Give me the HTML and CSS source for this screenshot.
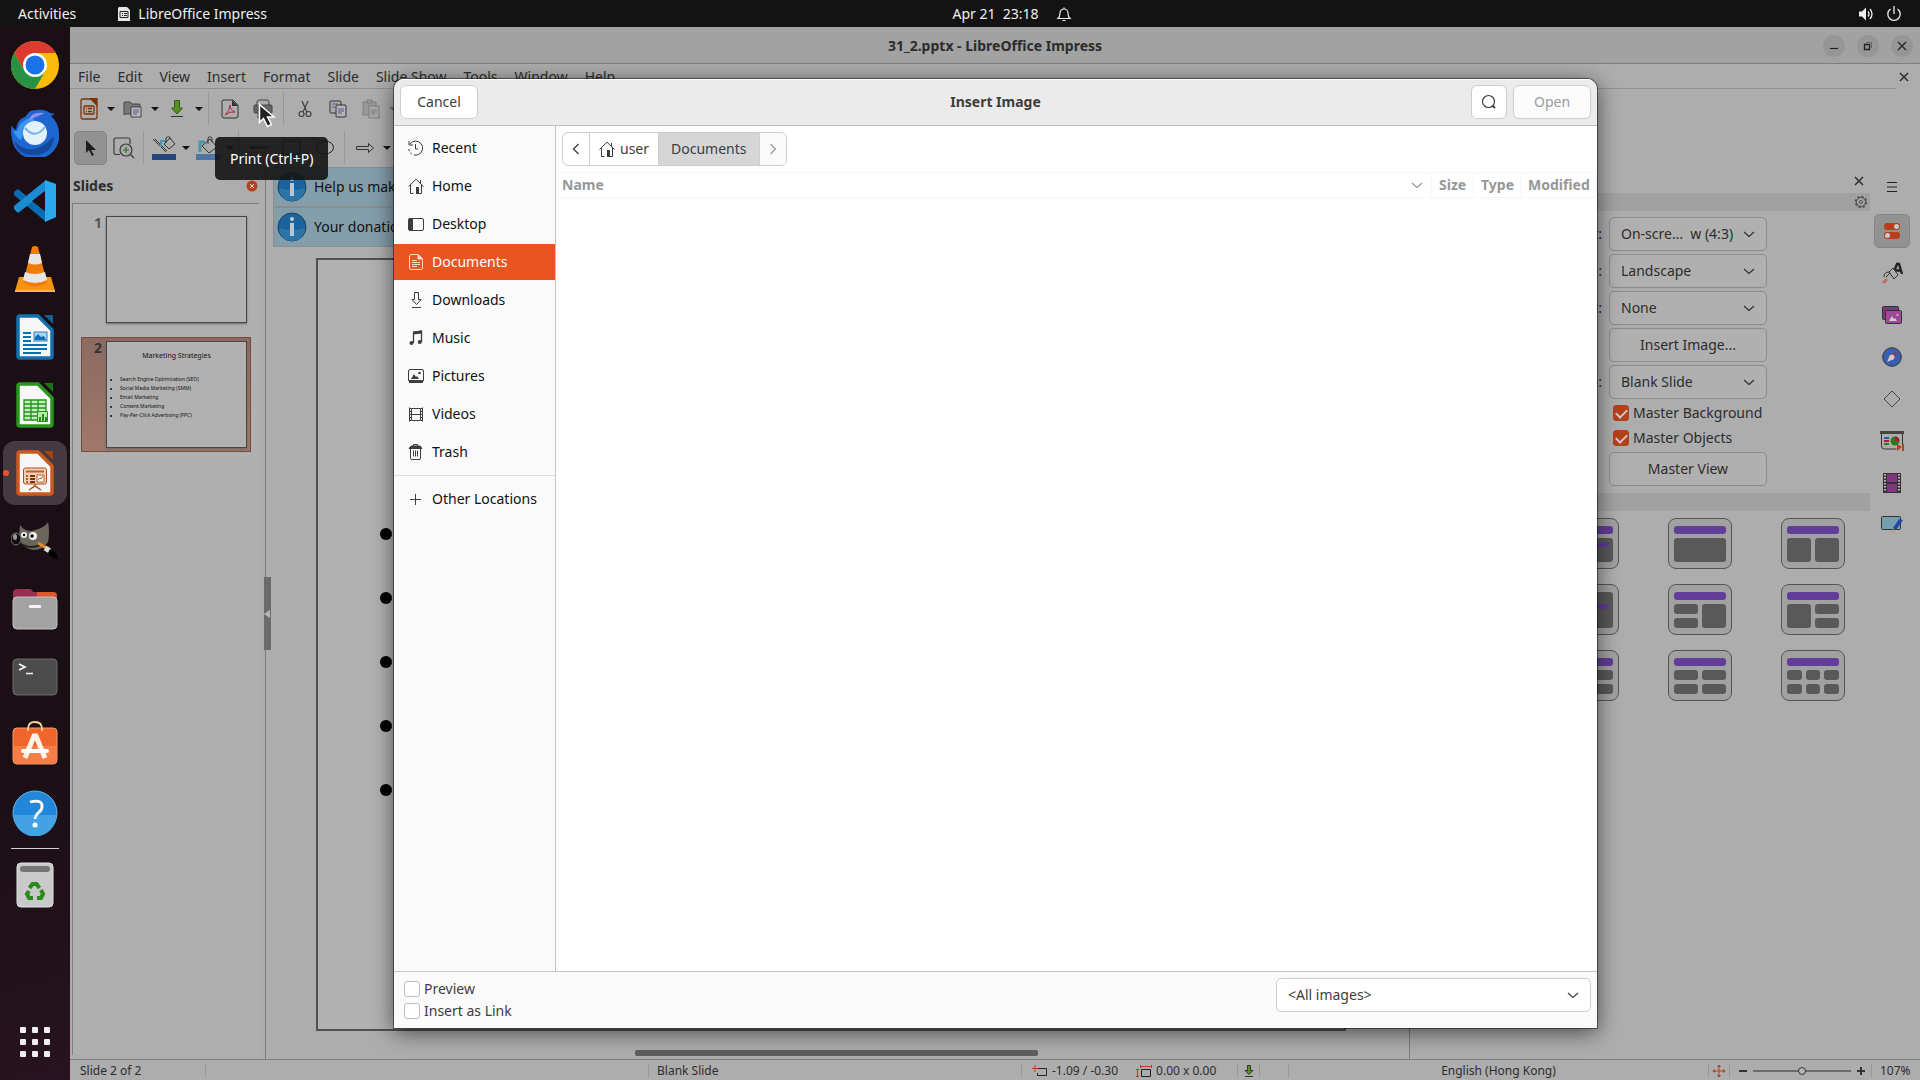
FILE: index.html
```html
<!DOCTYPE html>
<html lang="en">
<head>
  <meta charset="UTF-8">
  <meta name="viewport" content="width=device-width, initial-scale=1">
  <title>31_2.pptx - LibreOffice Impress</title>
  <link rel="stylesheet" href="styles.css">
</head>

<body>

<!-- Shared symbols -->
<svg class="symbols" width="0" height="0">
  <symbol id="chevron" viewBox="0 0 12 12"><path d="M1 4 6 8.500 11 4" fill="none" stroke="currentColor" stroke-width="1.100"/></symbol>
  <symbol id="cross" viewBox="0 0 12 12"><path d="M2 2 10 10M10 2 2 10" fill="none" stroke="currentColor" stroke-width="1.500"/></symbol>
  <symbol id="house" viewBox="0 0 16 16"><path d="M.5 8.500 8 1.200l7.500 7.300M2.500 7v8.500h3M13.500 7v8.500h-3M12.500 2v4" fill="none" stroke="currentColor"/><path d="M8 9h3v7H8z" fill="currentColor"/></symbol>
  <symbol id="info" viewBox="0 0 30 30"><circle cx="15" cy="15" r="14" fill="#1c629c" stroke="#1d4260"/><path d="M2 16q13 4 26 0a13 13 0 0 1-26 0z" fill="#2b74a6"/><circle cx="15" cy="7" r="2" fill="#c2cdd6"/><path d="M13 11h4v13h-4z" fill="#b9c5cf"/></symbol>
</svg>

<!-- Top panel -->
<div class="topbar">
  <div class="topbar-left">
    <span>Activities</span>
    <span class="app-name">
      <svg width="12" height="14" viewBox="0 0 12 14"><path d="M1 0h8l3 3v11H0V1z" fill="#e8e8e8"/><path d="M2 4.500h8v6H2zM4 6.500h1M6 6.500h3M4 8.500h1M6 8.500h3" stroke="#222" fill="none"/></svg>
      LibreOffice Impress
    </span>
  </div>
  <div class="topbar-clock">
    <span>Apr 21&nbsp; 23:18</span>
    <svg width="16" height="16" viewBox="0 0 16 16" fill="none" stroke="#eee" stroke-width="1.200"><path d="M2 12.500c2-1.500 2-3 2-5.500a4 4 0 0 1 8 0c0 2.500 0 4 2 5.500zM6.500 14.500h3M8 1.500v2"/></svg>
  </div>
  <div class="topbar-right">
    <svg width="16" height="16" viewBox="0 0 16 16"><path d="M1 5.500h3L8 1.500v13L4 10.500H1z" fill="#eee"/><path d="M10 5.500q2 2.500 0 5M12 3q4 5 0 10" fill="none" stroke="#eee" stroke-width="1.300"/></svg>
    <svg width="16" height="16" viewBox="0 0 16 16" fill="none" stroke="#eee" stroke-width="1.300"><path d="M4.500 3a6.200 6.200 0 1 0 7 0M8 0v8"/></svg>
  </div>
</div>

<div class="desktop">

  <!-- Dock -->
  <nav class="dock">
    <div class="dock-item">
      <svg width="48" height="48" viewBox="0 0 48 48"><circle cx="24" cy="24" r="24" fill="#fbbc09"/><path d="M3.200 12A24 24 0 0 1 44.800 12H24L13.600 30z" fill="#dd3b30"/><path d="M3.200 12A24 24 0 0 0 24 48L34.400 30 24 34 13.600 30z" fill="#289144"/><circle cx="24" cy="24" r="12" fill="#fff"/><circle cx="24" cy="24" r="9.500" fill="#1a73e8"/></svg>
    </div>
    <div class="dock-item">
      <svg width="48" height="48" viewBox="0 0 48 48"><path d="M1 16q1 4 4 5Q6 10 14 8L18 3q2-2 8-2 8-1 13 3l5 1-4 2q8 7 8 18A23 22 0 0 1 1 30Q-1 22 1 16z" fill="#1e67d2"/><path d="M2 22q8 14 9 6 2-10 14-15l-4-5Q8 12 6 22z" fill="#3b95f3"/><path d="M18 12q1-10 16-8l-7 3q-6 2-9 5z" fill="#9a8ff0"/><circle cx="24" cy="24" r="12" fill="#e3f1fc"/><path d="M14 19q10 12 20-1" fill="none" stroke="#77b3ea" stroke-width="2"/><path d="M3 32q10 10 20 8t20-13q-1 18-19 19T3 32z" fill="#144a9c"/></svg>
    </div>
    <div class="dock-item">
      <svg width="42" height="42" viewBox="0 0 42 42"><path d="M0 12l4-3 28 23v10L0 15z" fill="#0a6bb0"/><path d="M0 29l4 4L32 11V0L0 26z" fill="#1b8bd3"/><path d="M31 0l11 4v33l-11 5z" fill="#29aaf0"/><path d="M31 11 18 21l13 10z" fill="#1b0f16"/></svg>
    </div>
    <div class="dock-item">
      <svg width="42" height="48" viewBox="0 0 42 48"><path d="M5 32h32l4 14q0 1-1 1H2q-1 0-1-1z" fill="#f79413"/><path d="M1 45h40v2H1z" fill="#ffb640"/><path d="M18 2q3-2 6 0l9 36q-12 7-24 0z" fill="#ef7d0a"/><path d="M16 9h10l2 9q-7 3-14 0zM11 27q10 4 20 0l2 8q-12 6-24 0z" fill="#e6e6e6"/></svg>
    </div>
    <div class="dock-item">
      <svg width="38" height="46" viewBox="0 0 38 46"><path d="M4 2h18l14 14v26q0 2-2 2H4q-2 0-2-2V4q0-2 2-2z" fill="#f7f7f7" stroke="#1370ae" stroke-width="3.500"/><path d="M28 1h9v9z" fill="#155f91"/><path d="M7 19h8M7 23h8M7 27h8M7 31h24M7 35h24M7 39h18" stroke="#0b70b0" stroke-width="2"/><rect x="18" y="18" width="13" height="9" fill="#a5d5f0" stroke="#2a7fb4"/><path d="M19 26v-3l3-3 3 3 3-1 2 4z" fill="#0b70b0"/></svg>
    </div>
    <div class="dock-item">
      <svg width="38" height="46" viewBox="0 0 38 46"><path d="M4 2h18l14 14v26q0 2-2 2H4q-2 0-2-2V4q0-2 2-2z" fill="#f7f7f7" stroke="#29961e" stroke-width="3.500"/><path d="M28 1h9v9z" fill="#1c7415"/><path d="M8 18h22v20H8z" fill="#c4f0bd"/><path d="M8 18h22v20H8zM8 22h22M8 26h22M8 30h22M8 34h22M15 18v20M22 18v20" fill="none" stroke="#23911a" stroke-width="1.300"/><path d="M21.500 29.500h10v10h-10z" fill="#b3e8a9" stroke="#23911a"/><path d="M24 39v-4M27 39v-7M30 39v-4" stroke="#23911a" stroke-width="2"/></svg>
    </div>
    <div class="dock-item active">
      <svg width="38" height="46" viewBox="0 0 38 46"><path d="M4 2h18l14 14v26q0 2-2 2H4q-2 0-2-2V4q0-2 2-2z" fill="#f7f7f7" stroke="#cc5a1f" stroke-width="3.500"/><path d="M28 1h9v9z" fill="#a3430d"/><rect x="7.500" y="18" width="23" height="16" rx="2" fill="#f1d0bb" stroke="#a9501e"/><path d="M10 21.500h18" stroke="#c95a1b" stroke-width="2"/><path d="M10 26h2M10 29h2M10 32h2" stroke="#c95a1b" stroke-width="2"/><path d="M14 26h5M14 29h5M14 32h5" stroke="#7c3006" stroke-width="2"/><path d="M21 25h7v7h-7zM22 30l2-2 1 1 2-3" fill="#fff" stroke="#c95a1b"/><path d="M19 34v2M13 40l6-4 6 4" fill="none" stroke="#a9501e" stroke-width="1.500"/></svg>
    </div>
    <div class="dock-item">
      <svg width="48" height="40" viewBox="0 0 48 40"><path d="M9 4q4 6 12 6Q34 7 37 1q2 10 0 20-5 8-14 8Q12 28 8 17z" fill="#6b665c"/><ellipse cx="5" cy="18" rx="5" ry="6" fill="#111" stroke="#777"/><ellipse cx="4" cy="16" rx="2" ry="3" fill="#999"/><circle cx="13" cy="14" r="3" fill="#eee"/><circle cx="22" cy="15" r="4" fill="#eee"/><circle cx="13" cy="14" r="1.200"/><circle cx="21" cy="15" r="1.700"/><path d="M12 24q8 4 17 0" stroke="#222" fill="none" stroke-width="2"/><path d="M27 22l10 6" stroke="#e88b20" stroke-width="3"/><path d="M34 27l5 3" stroke="#ddd" stroke-width="5"/><path d="M39 28q6 2 8 10-7-1-10-6z" fill="#000"/></svg>
    </div>
    <div class="dock-item">
      <svg width="46" height="42" viewBox="0 0 46 42"><path d="M1 12V5q0-4 4-4h13q2 0 3 3h20q4 0 4 4v4z" fill="#9a2f53"/><path d="M25 4h16q4 0 4 4v4H25z" fill="#e0552a"/><rect x="1" y="9" width="44" height="32" rx="4" fill="#a3a3a3" stroke="#c2c2c2"/><rect x="17" y="17" width="12" height="3" rx="1" fill="#f4f4f4"/></svg>
    </div>
    <div class="dock-item">
      <svg width="46" height="38" viewBox="0 0 46 38"><rect x="1" y="1" width="44" height="36" rx="4" fill="#4c4c4c" stroke="#6b6b6b"/><path d="M7 6l6 3-6 3M14 15.500h7" fill="none" stroke="#f4f4f4" stroke-width="1.700"/></svg>
    </div>
    <div class="dock-item store">
      <svg width="46" height="44" viewBox="0 0 46 44"><rect x="1" y="7" width="44" height="36" rx="4" fill="#f0652b" stroke="#f79a6c"/><path d="M2 25h42v14q0 3-3 3H5q-3 0-3-3z" fill="#f47e45"/><path d="M16 10V8q0-7 7-7t7 7v2" fill="none" stroke="#f7d49b" stroke-width="1.800"/><path d="M13 37l9-22h2l9 22" fill="none" stroke="#fff0e8" stroke-width="5"/><path d="M11 30h24" stroke="#fff" stroke-width="4" stroke-linecap="round"/></svg>
    </div>
    <div class="dock-item">
      <svg width="46" height="46" viewBox="0 0 46 46"><circle cx="23" cy="23" r="22" fill="#2087da" stroke="#6cb5ea"/><path d="M1.500 25h43a21.500 21.500 0 0 1-43 0z" fill="#42a2e3"/><path d="M18 12q13-3 12 5 0 3-4 6-3 3-3 6" fill="none" stroke="#fff" stroke-width="2.800"/><circle cx="23" cy="35" r="2.500" fill="#fff"/></svg>
    </div>
    <hr class="dock-line">
    <div class="dock-item">
      <svg width="38" height="46" viewBox="0 0 38 46"><rect x="1" y="1" width="36" height="44" rx="4" fill="#c9c9c9" stroke="#e3e3e3"/><rect x="4" y="4" width="30" height="6" rx="3" fill="#757575"/><g fill="none" stroke="#2c8a1d" stroke-width="4"><path d="M13.500 26l3-4h4l3 4"/><path d="M25 28l2 4-2 4h-4"/><path d="M17 36h-4l-2-4 2-3"/></g></svg>
    </div>
    <div class="dock-item apps">
      <svg width="30" height="30" viewBox="0 0 30 30" fill="#f0f0f0"><rect width="6" height="6" rx="1"/><rect x="12" width="6" height="6" rx="1"/><rect x="24" width="6" height="6" rx="1"/><rect y="12" width="6" height="6" rx="1"/><rect x="12" y="12" width="6" height="6" rx="1"/><rect x="24" y="12" width="6" height="6" rx="1"/><rect y="24" width="6" height="6" rx="1"/><rect x="12" y="24" width="6" height="6" rx="1"/><rect x="24" y="24" width="6" height="6" rx="1"/></svg>
    </div>
  </nav>

  <!-- Impress window -->
  <main class="window">
    <div class="titlebar">
      <div class="window-title">31_2.pptx - LibreOffice Impress</div>
      <div class="window-buttons">
        <button aria-label="Minimize"><svg width="12" height="12"><path d="M2 8.500h8" stroke="#222" stroke-width="1.200"/></svg></button>
        <button aria-label="Restore"><svg width="12" height="12" fill="none" stroke="#222"><path d="M2.500 4.500h5v5h-5z" stroke-width="1.400"/><path d="M4 2.500h5.500V8" stroke="#666"/></svg></button>
        <button aria-label="Close"><svg width="12" height="12"><use href="#cross"/></svg></button>
      </div>
    </div>

    <div class="menubar">
      <div class="menus">
        <a href="#">File</a><a href="#">Edit</a><a href="#">View</a><a href="#">Insert</a><a href="#">Format</a><a href="#">Slide</a><a href="#">Slide Show</a><a href="#">Tools</a><a href="#">Window</a><a href="#">Help</a>
      </div>
      <button class="plain" aria-label="Close document"><svg width="12" height="12"><use href="#cross"/></svg></button>
    </div>

    <div class="toolbar">
      <button aria-label="New"><svg width="18" height="22" viewBox="0 0 18 22" fill="none" stroke="#7c3208" stroke-width="1.300"><path d="M3 1h8l6 6v12q0 2-2 2H3q-2 0-2-2V3q0-2 2-2z"/><path d="M10 0h6q1 0 1 1v6z" fill="#7c3208"/><rect x="4" y="8" width="10" height="8" rx="1"/><path d="M6 10.500h1M8 10.500h4M6 13.500h1M8 13.500h4"/></svg></button>
      <button class="drop" aria-label="New menu"></button>
      <button aria-label="Open"><svg width="20" height="18" viewBox="0 0 20 18"><path d="M1 15V3q0-1 1-1h5l2 2h7q1 0 1 1v9H2z" fill="#777" stroke="#444"/><path d="M8 7h10v10H8z" fill="#bbb" stroke="#444"/><path d="M10 10h6M10 12h6M10 14h4" stroke="#5c54a0"/></svg></button>
      <button class="drop" aria-label="Open menu"></button>
      <button aria-label="Save"><svg width="14" height="18" viewBox="0 0 14 18"><path d="M4.500.5h5V8h3L7 14 1.500 8h3z" fill="#5b8f22" stroke="#3b5c18"/><path d="M1 16.500h12" stroke="#333"/></svg></button>
      <button class="drop" aria-label="Save menu"></button>
      <span class="sep"></span>
      <button aria-label="Export as PDF"><svg width="18" height="20" viewBox="0 0 18 20" fill="none"><path d="M2 1h10l5 5v11q0 2-2 2H3q-2 0-2-2V2z" stroke="#333"/><path d="M11 1v6h6z" fill="#333"/><path d="M4 16q5-4 5-10 0 5 5 7-5-1-10 3z" stroke="#b3263f"/></svg></button>
      <button aria-label="Print"><svg width="20" height="20" viewBox="0 0 20 20" fill="none" stroke="#444"><path d="M4 6V3q0-2 2-2h8q2 0 2 2v3"/><rect x="1" y="6" width="18" height="8" rx="1" fill="#666"/><path d="M5 11h10v8H5z" fill="#aaa"/></svg></button>
      <span class="sep"></span>
      <button aria-label="Cut"><svg width="16" height="18" viewBox="0 0 16 18" fill="none" stroke="#3f3f3f" stroke-width="1.200"><path d="M5 1l5 11M11 1 6 12"/><circle cx="4.500" cy="14" r="2.500"/><circle cx="11.500" cy="14" r="2.500"/></svg></button>
      <button aria-label="Copy"><svg width="18" height="18" viewBox="0 0 18 18" stroke="#333"><rect x="1" y="1" width="11" height="12" rx="1" fill="#aaa"/><path d="M3 4h6M3 7h3" stroke="#5c54a0"/><rect x="7" y="5" width="10" height="12" rx="1" fill="#b5b5b5"/><path d="M9 9h6M9 11h6M9 13h4" stroke="#5c54a0"/></svg></button>
      <button aria-label="Paste"><svg width="18" height="20" viewBox="0 0 18 20" stroke="#7e7e7e"><path d="M1 3h13v13H1z" fill="#999"/><path d="M5 1h5v3H5z" fill="#999"/><rect x="7" y="7" width="10" height="12" fill="#a9a9a9"/><path d="M9 11h6M9 13h6M9 15h4"/></svg></button>
      <button class="drop faded" aria-label="Paste menu"></button>
    </div>

    <div class="toolbar drawbar">
      <button class="pressed" aria-label="Select"><svg width="12" height="18" viewBox="0 0 12 18"><path d="M1 1v13l3-3 3 6 2-1-3-5h5z" fill="#1c1c1c"/></svg></button>
      <button aria-label="Zoom and pan"><svg width="22" height="22" viewBox="0 0 22 22" fill="none" stroke="#3c3c3c" stroke-width="1.200"><path d="M7 17.500H3q-2 0-2-2V3q0-2 2-2h12q2 0 2 2v4"/><circle cx="13" cy="13" r="6" fill="#aaa"/><path d="M17.500 17.500 21 21"/><path d="M10 13h6M13 10v6" stroke="#207a17"/></svg></button>
      <span class="sep"></span>
      <button aria-label="Line color"><svg width="24" height="24" viewBox="0 0 24 24" fill="none" stroke="#333"><path d="M1 3l13 13M3 3l12 12"/><path d="M9 11V5h5" stroke="#4f94aa" stroke-width="2"/><path d="M12 8l6-6 5 6-6 5zM14 7V2q3-3 5 1"/><path d="M0 18h24v6H0z" fill="#26457b" stroke="none"/></svg></button>
      <button class="drop" aria-label="Line color menu"></button>
      <button aria-label="Fill color"><svg width="24" height="24" viewBox="0 0 24 24" fill="none" stroke="#333"><path d="M4 16V6h5" stroke="#4f94aa" stroke-width="3"/><path d="M6 10l8-7 7 8-8 6z" fill="#aaa"/><path d="M12 8V2q3-3 4 1v3"/><path d="M0 18h24v6H0z" fill="#4c74a4" stroke="none"/></svg></button>
      <button class="drop" aria-label="Fill color menu"></button>
      <span class="sep"></span>
      <button aria-label="Line"><svg width="20" height="16"><path d="M1 7.500h18" stroke="#222" stroke-width="2"/></svg></button>
      <button aria-label="Rectangle"><svg width="20" height="16"><path d="M1 1h17v13H1z" fill="none" stroke="#222"/></svg></button>
      <button aria-label="Ellipse"><svg width="20" height="16"><ellipse cx="10" cy="7.500" rx="8.500" ry="6.500" fill="none" stroke="#222"/></svg></button>
      <span class="sep"></span>
      <button aria-label="Arrow"><svg width="18" height="12" viewBox="0 0 18 12"><path d="M.5 4.500h12v-3l5 4.500-5 4.500v-3H.5z" fill="none" stroke="#333"/></svg></button>
      <button class="drop" aria-label="Arrow menu"></button>
    </div>

    <div class="workspace">
      <!-- Slide list -->
      <aside class="slides-panel">
        <div class="panel-head">
          <strong>Slides</strong>
          <button class="plain" aria-label="Close slides pane"><svg width="12" height="12" viewBox="0 0 12 12"><circle cx="6" cy="6" r="5.500" fill="#b5401c"/><path d="M4 4l4 4M8 4 4 8" stroke="#ddd"/></svg></button>
        </div>
        <div class="slide-list">
          <div class="slide-row">
            <span class="slide-no">1</span>
            <div class="thumb"></div>
          </div>
          <div class="slide-row selected">
            <span class="slide-no">2</span>
            <div class="thumb">
              <div class="thumb-title">Marketing Strategies</div>
              <ul class="thumb-list">
                <li>Search Engine Optimization (SEO)</li>
                <li>Social Media Marketing (SMM)</li>
                <li>Email Marketing</li>
                <li>Content Marketing</li>
                <li>Pay-Per-Click Advertising (PPC)</li>
              </ul>
            </div>
          </div>
        </div>
      </aside>

      <!-- Editor -->
      <section class="editor">
        <div class="pane-handle"><svg width="6" height="8"><path d="M6 0v8L0 4z" fill="#b5b5b5"/></svg></div>
        <div class="infobar"><svg width="30" height="30"><use href="#info"/></svg><span>Help us mak</span></div>
        <div class="infobar"><svg width="30" height="30"><use href="#info"/></svg><span>Your donatio</span></div>
        <div class="canvas">
          <ul class="page">
            <li></li><li></li><li></li><li></li><li></li>
          </ul>
        </div>
        <div class="scroll-track"><div class="scroll-thumb"></div></div>
      </section>

      <!-- Properties -->
      <aside class="properties">
        <div class="deck-title"><button class="plain" aria-label="Close sidebar deck"><svg width="12" height="12"><use href="#cross"/></svg></button></div>
        <div class="deck-bar">
          <svg width="14" height="14" viewBox="0 0 14 14" fill="none" stroke="#555"><circle cx="7" cy="7" r="5.300" stroke-dasharray="2.500 1.600" stroke-width="2"/><circle cx="7" cy="7" r="4.500"/><circle cx="7" cy="7" r="1.500"/></svg>
        </div>
        <div class="slide-props">
          <label for="format">Format:</label>
          <div class="select"><select id="format"><option>On-scre…&nbsp; w (4:3)</option></select><svg width="12" height="12"><use href="#chevron"/></svg></div>
          <label for="orientation">Orientation:</label>
          <div class="select"><select id="orientation"><option>Landscape</option></select><svg width="12" height="12"><use href="#chevron"/></svg></div>
          <label for="background">Background:</label>
          <div class="select"><select id="background"><option>None</option></select><svg width="12" height="12"><use href="#chevron"/></svg></div>
          <button class="wide">Insert Image...</button>
          <label for="master">Master Slide:</label>
          <div class="select"><select id="master"><option>Blank Slide</option></select><svg width="12" height="12"><use href="#chevron"/></svg></div>
          <div class="checks">
            <label><input type="checkbox" checked>Master Background</label>
            <label><input type="checkbox" checked>Master Objects</label>
          </div>
          <button class="wide">Master View</button>
        </div>
        <div class="deck-bar"></div>
        <div class="layouts">
          <div class="layout"><i class="head"></i><i class="full lines"></i></div>
          <div class="layout"><i class="head"></i><i class="full"></i></div>
          <div class="layout"><i class="head"></i><i class="half tall"></i><i class="half tall"></i></div>
          <div class="layout"><i class="whole lines"></i></div>
          <div class="layout"><i class="head"></i><i class="half"></i><i class="half tall"></i><i class="half"></i></div>
          <div class="layout"><i class="head"></i><i class="half tall"></i><i class="half"></i><i class="half"></i></div>
          <div class="layout"><i class="head"></i><i class="row"></i><i class="row"></i></div>
          <div class="layout"><i class="head"></i><i class="half"></i><i class="half"></i><i class="half"></i><i class="half"></i></div>
          <div class="layout"><i class="head"></i><i></i><i></i><i></i><i></i><i></i><i></i></div>
        </div>
      </aside>

      <nav class="tabs">
        <button class="menu-tab" aria-label="Sidebar settings"><svg width="10" height="10"><path d="M0 .5h10M0 5h10M0 9.500h10" stroke="#222" stroke-width="1"/></svg></button>
        <button class="pressed" aria-label="Properties"><svg width="16" height="16"><rect width="16" height="7" rx="3" fill="#b5401c"/><rect y="9" width="16" height="7" rx="3" fill="#b5401c"/><circle cx="12.500" cy="3.500" r="2.500" fill="#c9c9c9"/><circle cx="3.500" cy="12.500" r="2.500" fill="#c9c9c9"/></svg></button>
        <button aria-label="Styles"><svg width="22" height="22" viewBox="0 0 22 22" fill="none"><path d="M12 12 16 2h2l3 10M15 8.500h5" stroke="#222" stroke-width="2.400"/><path d="M2 21l4-4" stroke="#c47060" stroke-width="3"/><path d="M8 10l4-4 5 7-4 4z" fill="#adadad" stroke="#333"/><path d="M8 10q-5 0-5 5M5 15l4-4" stroke="#333"/></svg></button>
        <button aria-label="Gallery"><svg width="20" height="18" viewBox="0 0 20 18"><rect x=".5" y=".5" width="16" height="13" rx="1" fill="#80357c" stroke="#333"/><rect x="3.500" y="4.500" width="16" height="13" rx="1" fill="#9f4899" stroke="#333"/><path d="M7 15l3-5 2 3 1-1 2 3z" fill="#ccc"/><circle cx="15.500" cy="9" r="1" fill="#ccc"/></svg></button>
        <button aria-label="Navigator"><svg width="20" height="20" viewBox="0 0 20 20"><circle cx="10" cy="10" r="9.300" fill="#3a5fae" stroke="#333"/><path d="M5 15l3-7 4 4z" fill="#ccc"/><path d="M8 8l7-3-3 7z" fill="#b32828"/><circle cx="10" cy="10" r="2.500" fill="#ccc"/></svg></button>
        <button aria-label="Shapes"><svg width="18" height="18"><path d="M9 1l8 8-8 8-8-8z" fill="none" stroke="#444"/></svg></button>
        <button aria-label="Slide transition"><svg width="24" height="20" viewBox="0 0 24 20"><path d="M0 0h24v3H0z" fill="#444"/><path d="M1.500 3v12q0 3 3 3h12M22.500 3v10" fill="none" stroke="#333"/><path d="M4 6h5v2H4z" fill="#1c5fae"/><path d="M4 9h5v2H4z" fill="#b0173f"/><path d="M4 12h5v2H4z" fill="#2b7a1d"/><circle cx="15" cy="10" r="4.500" fill="#2b7a1d"/><path d="M15 10V5.500a4.500 4.500 0 0 1 4.500 4.500z" fill="#b0173f"/><path d="M17 13l5 3-5 4zM22 13h2v7h-2z" fill="#b5401c"/></svg></button>
        <button aria-label="Animation"><svg width="18" height="20" viewBox="0 0 18 20"><path d="M0 0h18v20H0z" fill="#333"/><path d="M4 1h10v8H4zM4 11h10v8H4z" fill="#80357c"/><path d="M2 1v18M16 1v18" stroke="#bbb" stroke-width="2" stroke-dasharray="1.500 1.500"/></svg></button>
        <button aria-label="Master slides"><svg width="22" height="20" viewBox="0 0 22 20"><rect x=".5" y="1.500" width="19" height="13" rx="1" fill="#769fae" stroke="#333"/><path d="M18 4l4 1-7 10-3-2z" fill="#2446a0"/><path d="M12 14l3 2-4 4z" fill="#c79a72"/></svg></button>
      </nav>
    </div>

    <div class="statusbar">
      <span class="st-page">Slide 2 of 2</span>
      <span class="st-gap"></span>
      <span class="st-master">Blank Slide</span>
      <span class="st-pos"><svg width="16" height="12" viewBox="0 0 16 12" fill="none"><path d="M6 3.500h8.500v7h-9V8" stroke="#222"/><path d="M0 3.500h6M3 0v7" stroke="#b5401c"/></svg>-1.09 / -0.30
        <svg class="size-icon" width="16" height="12" viewBox="0 0 16 12" fill="none"><path d="M5.500 4.500h9v7h-9z" stroke="#222"/><path d="M4 1.500h12M4.500 0v3M15.500 0v3M1.500 4v8M0 4.500h3M0 11.500h3" stroke="#b5401c"/></svg>0.00 x 0.00</span>
      <span class="st-save"><svg width="10" height="12" viewBox="0 0 10 12"><path d="M3.500.5h3v5H9L5 9.500 1 5.500h2.500z" fill="#5b8f22" stroke="#333"/><path d="M1 11.500h8" stroke="#333"/></svg></span>
      <span class="st-sign"></span>
      <span class="st-lang">English (Hong Kong)</span>
      <span class="st-fit"><svg width="14" height="14" viewBox="0 0 14 14" stroke="#b5401c" fill="#b5401c"><path d="M7 1v12M1 7h12"/><path d="M5 3l2-2.500L9 3zM5 11l2 2.500L9 11zM3 5 .5 7 3 9zM11 5l2.500 2L11 9z" stroke="none"/></svg></span>
      <span class="st-zoom">
        <svg width="8" height="8"><path d="M0 4h8" stroke="#333" stroke-width="2"/></svg>
        <input type="range" min="0" max="100" value="50" aria-label="Zoom">
        <svg width="8" height="8"><path d="M0 4h8M4 0v8" stroke="#333" stroke-width="2"/></svg>
      </span>
      <span class="st-percent">107%</span>
    </div>
  </main>
</div>

<!-- Tooltip and pointer -->
<div class="tooltip" role="tooltip">Print (Ctrl+P)</div>
<svg class="pointer" width="18" height="26" viewBox="0 0 18 26"><path d="M1.500 1.500v18l4-4 4 8 4-2-4-7.500h6.500z" fill="#222" stroke="#fff" stroke-width="1.500"/></svg>

<!-- Insert Image dialog -->
<div class="dialog" role="dialog" aria-label="Insert Image">
  <div class="dialog-head">
    <div><button class="btn">Cancel</button></div>
    <strong>Insert Image</strong>
    <div class="dialog-actions">
      <button class="btn search" aria-label="Search"><svg width="16" height="16" fill="none" stroke="#3d3d3d"><circle cx="7.500" cy="7.500" r="6" stroke-width="1.200"/><path d="M11.500 11.500 14 14" stroke-width="2"/></svg></button>
      <button class="btn" disabled>Open</button>
    </div>
  </div>

  <div class="dialog-body">
    <nav class="places">
      <a href="#"><svg width="16" height="16" fill="none" stroke="currentColor"><path d="M2 4a7 7 0 1 1-1.300 5" stroke-dasharray="30 2 2 2"/><path d="M7.500 4v5H10M1 1v4h4"/></svg>Recent</a>
      <a href="#"><svg width="16" height="16"><use href="#house"/></svg>Home</a>
      <a href="#"><svg width="16" height="16"><rect x=".5" y="2.500" width="15" height="12" rx="1.500" fill="none" stroke="currentColor"/><path d="M1 2h4v13H1z" fill="currentColor"/></svg>Desktop</a>
      <a href="#" class="current"><svg width="16" height="16" fill="none" stroke="currentColor"><path d="M2.500.5H10l4.500 4.500v9q0 1.500-1.500 1.500H3q-1.500 0-1.500-1.500V2zM4 6.500h5M4 8.500h8M4 10.500h8M4 12.500h5"/><path d="M10 .5V5h4.500z" fill="currentColor"/></svg>Documents</a>
      <a href="#"><svg width="16" height="16" fill="none" stroke="currentColor"><path d="M6.500.5h4v7H13l-4.500 5L4 7.500h2.500zM4 15.500h9"/></svg>Downloads</a>
      <a href="#"><svg width="16" height="16"><path d="M5.500 13V2.500L13.500 1v11" fill="none" stroke="currentColor" stroke-width="1.300"/><path d="M5 1.500 14 .5v3L5 4.500z" fill="currentColor"/><circle cx="3.500" cy="13" r="2" fill="currentColor"/><circle cx="11.800" cy="12" r="2" fill="currentColor"/></svg>Music</a>
      <a href="#"><svg width="16" height="16"><rect x=".5" y="1.500" width="15" height="12" rx="1.500" fill="none" stroke="currentColor"/><path d="M1 12h14v3H1zM3 11l3-5 2 3 1-1 2 3z" fill="currentColor"/><circle cx="11.500" cy="5" r="1.300" fill="currentColor"/></svg>Pictures</a>
      <a href="#"><svg width="16" height="16" fill="none" stroke="currentColor"><path d="M3.500 2.500h9v12h-9zM3.500 8.500h9M1.500 1.500v14M14.500 1.500v14"/><path d="M2.500 2v13M13.500 2v13" stroke-dasharray="1 2"/></svg>Videos</a>
      <a href="#"><svg width="16" height="16" fill="none" stroke="currentColor"><path d="M2.500 5v9q0 1.500 1.500 1.500h7q1.500 0 1.500-1.500V5M5.500 6.500v6M7.500 6.500v6M9.500 6.500v6M5.500 2V.5h4V2"/><path d="M1 4.500 3 2h9l2 2.500z" fill="currentColor"/></svg>Trash</a>
      <hr>
      <a href="#"><svg width="16" height="16" stroke="currentColor"><path d="M2 8.500h11M7.500 3v11"/></svg>Other Locations</a>
    </nav>

    <section class="files">
      <div class="pathbar">
        <button aria-label="Back"><svg width="8" height="12" fill="none" stroke="#3d3d3d" stroke-width="1.300"><path d="M6.500 1 1.500 6l5 5"/></svg></button>
        <button><svg width="16" height="16"><use href="#house"/></svg>user</button>
        <button class="current">Documents</button>
        <button class="off" aria-label="Forward"><svg width="8" height="12" fill="none" stroke="#999" stroke-width="1.300"><path d="M1.500 1l5 5-5 5"/></svg></button>
      </div>
      <table>
        <thead>
          <tr>
            <th><span class="sorted">Name<svg width="12" height="12"><use href="#chevron"/></svg></span></th>
            <th class="col-size">Size</th>
            <th class="col-type">Type</th>
            <th class="col-modified">Modified</th>
          </tr>
        </thead>
        <tbody></tbody>
      </table>
    </section>
  </div>

  <div class="dialog-foot">
    <div class="options">
      <label><input type="checkbox">Preview</label>
      <label><input type="checkbox">Insert as Link</label>
    </div>
    <div class="select light">
      <select aria-label="File type"><option>&lt;All images&gt;</option></select>
      <svg width="12" height="12"><use href="#chevron"/></svg>
    </div>
  </div>
</div>

</body>
</html>
```
FILE: styles.css
```css
* {
  box-sizing: border-box;
}
body {
  margin: 0;
  height: 100vh;
  display: flex;
  flex-direction: column;
  position: relative;
  overflow: hidden;
  font-family: "Noto Sans", "Open Sans", sans-serif;
  font-size: 14px;
  line-height: 20px;
  color: #2c2c2c;
}
button, select, input {
  font: inherit;
  color: inherit;
  margin: 0;
}
button {
  display: flex;
  align-items: center;
  justify-content: center;
  padding: 0;
  border: 0;
  background: none;
}
a {
  color: inherit;
  text-decoration: none;
}
svg {
  display: block;
  flex: none;
}
.symbols {
  position: absolute;
}

/* Top panel */
.topbar {
  display: grid;
  grid-template-columns: 1fr auto 1fr;
  align-items: center;
  height: 27px;
  padding: 0 18px;
  background: #131313;
  color: #f0f0f0;
}
.topbar-left {
  display: flex;
  gap: 42px;
}
.app-name, .topbar-clock, .topbar-right {
  display: flex;
  align-items: center;
}
.app-name {
  gap: 8px;
}
.topbar-clock {
  gap: 17px;
  padding-left: 104px;
}
.topbar-right {
  justify-content: flex-end;
  gap: 12px;
}

.desktop {
  flex: 1;
  min-height: 0;
  display: flex;
}

/* Dock */
.dock {
  width: 70px;
  flex: none;
  display: flex;
  flex-direction: column;
  align-items: center;
  gap: 4px;
  padding: 6px 0 6px;
  background: linear-gradient(165deg, #1b0f16 70%, #27131f);
}
.dock-item {
  width: 64px;
  height: 64px;
  display: flex;
  align-items: center;
  justify-content: center;
  border-radius: 12px;
}
.dock-item.active {
  background: #443a40;
  position: relative;
}
.dock-item.active::before {
  content: "";
  position: absolute;
  left: 0;
  width: 6px;
  height: 6px;
  border-radius: 50%;
  background: #e95420;
}
.dock-item.store {
  padding-bottom: 4px;
}
.dock-line {
  width: 48px;
  height: 1px;
  margin: -1px 0 0;
  border: 0;
  background: #d5d0d3;
}
.apps {
  margin-top: auto;
}

/* Window */
.window {
  flex: 1;
  min-width: 0;
  display: flex;
  flex-direction: column;
  background: #adadad;
}
.titlebar {
  display: grid;
  grid-template-columns: 1fr auto 1fr;
  align-items: center;
  height: 37px;
  padding: 1px 7px 0;
  background: #a2a2a2;
  border-bottom: 1px solid #7d7d7d;
}
.window-title {
  grid-column: 2;
  font-weight: bold;
}
.window-buttons {
  display: flex;
  justify-content: flex-end;
  gap: 12px;
}
.window-buttons button {
  width: 22px;
  height: 22px;
  border-radius: 50%;
  background: #969696;
}
.menubar {
  display: flex;
  align-items: center;
  gap: 2px;
  height: 25px;
  padding-right: 10px;
}
.menus {
  flex: 1;
  align-self: stretch;
  display: flex;
  align-items: center;
  gap: 17px;
  padding: 1px 0 0 8px;
  border-bottom: 1px solid #929292;
}
.toolbar {
  display: flex;
  align-items: center;
  height: 39px;
  padding-left: 2px;
}
.toolbar button {
  width: 33px;
  height: 34px;
}
.toolbar .pressed {
  background: #929292;
  border: 1px solid #848484;
  border-radius: 5px;
}
.toolbar .drop {
  width: 11px;
}
.drop::before {
  content: "";
  border: 4px solid transparent;
  border-top-color: #111;
  border-bottom: 0;
}
.drop.faded::before {
  border-top-color: #777;
}
.sep {
  width: 1px;
  height: 33px;
  margin: 0 4px;
  background: #989898;
}
.drawbar {
  padding-left: 4px;
}
.drawbar .sep {
  margin: 0 3px;
}

.workspace {
  flex: 1;
  min-height: 0;
  display: flex;
}

/* Slide list */
.slides-panel {
  width: 196px;
  flex: none;
  display: flex;
  flex-direction: column;
  border-right: 1px solid #7d7d7d;
}
.panel-head {
  display: flex;
  align-items: center;
  justify-content: space-between;
  height: 36px;
  padding: 2px 7px 0 3px;
}
.slide-list {
  flex: 1;
  margin: 0 6px 4px 2px;
  padding: 8px 8px 0 8px;
  border-top: 1px solid #7d7d7d;
  border-left: 1px solid #7d7d7d;
  background: #b0b0b0;
}
.slide-row {
  display: flex;
  justify-content: space-between;
  height: 115px;
  margin-bottom: 10px;
  padding: 3px;
  border: 1px solid transparent;
}
.slide-row.selected {
  border-color: #764b3e;
  background: linear-gradient(#8c6b60, #9f786b);
}
.slide-no {
  width: 17px;
  text-align: right;
  line-height: 14px;
  font-weight: bold;
  color: #555;
}
.selected .slide-no {
  color: #333;
}
.thumb {
  width: 141px;
  height: 107px;
  border: 1px solid #474747;
  background: #b1b1b1;
  box-shadow: 0 1px 2px #666;
  color: #111;
}
.thumb-title {
  margin-top: 9px;
  text-align: center;
  font-size: 7px;
  line-height: 10px;
}
.thumb-list {
  margin: 14px 0 0;
  padding-left: 13px;
  font-size: 5px;
  line-height: 9px;
}

/* Editor */
.editor {
  flex: 1;
  min-width: 0;
  display: flex;
  flex-direction: column;
  position: relative;
  padding-left: 7px;
}
.pane-handle {
  position: absolute;
  left: -2px;
  top: 46%;
  width: 7px;
  height: 73px;
  display: flex;
  align-items: center;
  background: #6b6b6b;
}
.infobar {
  display: flex;
  align-items: center;
  gap: 7px;
  height: 40px;
  padding-left: 3px;
  border: 1px solid #8d8d8d;
  background: #829eab;
  color: #111;
}
.canvas {
  flex: 1;
  display: flex;
  padding: 11px 63px 19px 43px;
}
.page {
  flex: 1;
  display: flex;
  flex-direction: column;
  gap: 52px;
  margin: 0;
  padding: 268px 0 0 62px;
  border: 2px solid #505050;
  background: #b1b1b1;
  list-style: none;
}
.page li {
  width: 12px;
  height: 12px;
  border-radius: 50%;
  background: #000;
}
.scroll-track {
  height: 9px;
  padding: 0 371px 0 362px;
}
.scroll-thumb {
  height: 6px;
  border-radius: 2px;
  background: #5e5e5e;
}

/* Properties */
.properties {
  width: 461px;
  flex: none;
  border-left: 1px solid #7d7d7d;
}
.deck-title {
  display: flex;
  align-items: center;
  justify-content: flex-end;
  height: 26px;
  padding: 2px 5px 0 0;
}
.deck-bar {
  display: flex;
  align-items: center;
  justify-content: flex-end;
  height: 18px;
  padding-right: 2px;
  background: #a1a1a1;
}
.slide-props {
  display: grid;
  grid-template-columns: 1fr 158px;
  gap: 3px 7px;
  align-items: center;
  padding: 6px 103px 7px 0;
}
.slide-props > label {
  text-align: right;
}
.wide, .checks {
  grid-column: 2;
}
.wide {
  height: 34px;
  border: 1px solid #8c8c8c;
  border-radius: 5px;
  background: #b0b0b0;
}
.select {
  display: grid;
  align-items: center;
}
.select select {
  grid-area: 1 / 1;
  width: 100%;
  height: 34px;
  padding: 0 30px 0 11px;
  appearance: none;
  border: 1px solid #8c8c8c;
  border-radius: 5px;
  background: #b0b0b0;
}
.select svg {
  grid-area: 1 / 1;
  justify-self: end;
  margin-right: 12px;
  pointer-events: none;
}
.checks {
  display: flex;
  flex-direction: column;
  gap: 5px;
  padding: 1px 0 1px 4px;
}
.checks label, .options label {
  display: flex;
  align-items: center;
  gap: 4px;
  white-space: nowrap;
}
input[type="checkbox"] {
  appearance: none;
  width: 16px;
  height: 16px;
  display: flex;
  justify-content: center;
  border: 1px solid #bfbfbf;
  border-radius: 3px;
  background: #fff;
}
input[type="checkbox"]:checked {
  border-color: #b5401c;
  background: #b5401c;
}
input[type="checkbox"]:checked::before {
  content: "";
  width: 5px;
  height: 9px;
  margin-top: 1px;
  border: solid #ccc;
  border-width: 0 2px 2px 0;
  transform: rotate(45deg);
}
.layouts {
  display: grid;
  grid-template-columns: repeat(3, 64px);
  justify-content: end;
  gap: 15px 49px;
  padding: 7px 25px 0 0;
}
.layout {
  height: 51px;
  display: grid;
  grid-template-columns: repeat(12, 1fr);
  grid-template-rows: 8px 10px 10px;
  grid-auto-flow: dense;
  gap: 4px 0;
  align-content: center;
  padding: 0 3px;
  border: 1px solid #555;
  border-radius: 8px;
  background: #a1a1a1;
}
.layout i {
  grid-column: span 4;
  margin: 0 2px;
  border-radius: 3px;
  background: #595959;
}
.layout .head, .layout .full, .layout .row, .layout .whole {
  grid-column: span 12;
}
.layout .head {
  background: #623d99;
}
.layout .half {
  grid-column: span 6;
}
.layout .tall, .layout .full {
  grid-row: span 2;
}
.layout .whole {
  grid-row: span 3;
}
.layout .lines {
  display: flex;
  justify-content: center;
  padding-top: 4px;
}
.layout .whole.lines {
  padding-top: 12px;
}
.lines::before {
  content: "";
  width: 44px;
  height: 5px;
  border-radius: 2px;
  background: #623d99;
}

/* Sidebar tabs */
.tabs {
  width: 50px;
  flex: none;
  display: flex;
  flex-direction: column;
  align-items: center;
  gap: 8px;
  padding-right: 6px;
}
.tabs button {
  width: 36px;
  height: 34px;
  border-radius: 5px;
}
.tabs .menu-tab {
  height: 39px;
}
.tabs .pressed {
  border: 1px solid #858585;
  background: #929292;
}

/* Status bar */
.statusbar {
  display: flex;
  align-items: center;
  height: 21px;
  padding-top: 1px;
  border-top: 1px solid #7d7d7d;
  font-size: 12px;
  line-height: 16px;
  white-space: nowrap;
}
.statusbar span {
  display: flex;
  align-items: center;
  height: 14px;
  border-right: 1px solid #999;
}
.statusbar .st-page {
  width: 136px;
  padding-left: 10px;
}
.statusbar .st-gap {
  width: 443px;
}
.statusbar .st-master {
  width: 373px;
  padding-left: 8px;
}
.statusbar .st-pos {
  width: 216px;
  gap: 4px;
  padding-left: 10px;
}
.size-icon {
  margin-left: 14px;
}
.statusbar .st-save {
  width: 22px;
  justify-content: center;
}
.statusbar .st-sign {
  width: 29px;
}
.statusbar .st-lang {
  flex: 1;
  justify-content: center;
}
.statusbar .st-fit {
  width: 21px;
  justify-content: center;
}
.statusbar .st-zoom {
  width: 142px;
  justify-content: center;
  gap: 6px;
  padding-left: 2px;
}
.statusbar .st-percent {
  width: 48px;
  padding-left: 8px;
  border: 0;
}
.st-zoom input {
  width: 98px;
  height: 10px;
  appearance: none;
  background: linear-gradient(#6b6b6b, #6b6b6b) center / 100% 2px no-repeat;
}
.st-zoom input::-webkit-slider-thumb {
  appearance: none;
  width: 8px;
  height: 8px;
  border: 1px solid #333;
  border-radius: 50%;
  background: #b5b5b5;
}

/* Tooltip and pointer */
.tooltip {
  position: absolute;
  left: 215px;
  top: 137px;
  padding: 12px 15px 11px;
  border-radius: 5px;
  background: rgba(20, 20, 20, 0.9);
  color: #fff;
}
.pointer {
  position: absolute;
  left: 258px;
  top: 103px;
}

/* Dialog */
.dialog {
  position: absolute;
  left: 394px;
  top: 79px;
  right: 323px;
  bottom: 52px;
  display: flex;
  flex-direction: column;
  overflow: hidden;
  border-radius: 10px 10px 0 0;
  background: #fafafa;
  box-shadow: 0 0 0 1px rgba(0, 0, 0, 0.45), 0 4px 22px rgba(0, 0, 0, 0.6);
  color: #3d3d3d;
}
.dialog-head {
  display: grid;
  grid-template-columns: 1fr auto 1fr;
  align-items: center;
  height: 47px;
  padding: 0 6px;
  border-bottom: 1px solid #bfbfbf;
  box-shadow: inset 0 1px #fff;
  background: #ebebeb;
}
.dialog-actions {
  display: flex;
  justify-content: flex-end;
  gap: 6px;
}
.btn {
  width: 78px;
  height: 34px;
  border: 1px solid #cdcdcd;
  border-radius: 6px;
  background: #fff;
}
.btn.search {
  width: 36px;
}
.btn:disabled {
  background: #fcfcfc;
  color: #9a9a9a;
}
.dialog-body {
  flex: 1;
  display: flex;
}
.places {
  width: 162px;
  display: flex;
  flex-direction: column;
  gap: 2px;
  padding-top: 4px;
  border-right: 1px solid #c4c4c4;
  color: #111;
}
.places a {
  display: flex;
  align-items: center;
  gap: 8px;
  height: 36px;
  padding-left: 14px;
  white-space: nowrap;
}
.places svg {
  color: #3d3d3d;
}
.places .current {
  background: #e95420;
  color: #fff;
}
.places .current svg {
  color: #ffd9cb;
}
.places hr {
  width: 100%;
  height: 1px;
  margin: 3px 0;
  border: 0;
  background: #dcdcdc;
}
.files {
  flex: 1;
  display: flex;
  flex-direction: column;
  align-items: flex-start;
  gap: 6px;
  padding-top: 6px;
  background: #fff;
}
.pathbar {
  display: flex;
  height: 34px;
  margin-left: 6px;
  overflow: hidden;
  border: 1px solid #cdcdcd;
  border-radius: 6px;
}
.pathbar button {
  gap: 5px;
  padding: 0 9px;
}
.pathbar button + button {
  border-left: 1px solid #cdcdcd;
}
.pathbar .current {
  padding: 0 12px;
  background: #d6d6d6;
}
.pathbar .off {
  background: #fafafa;
}
table {
  width: 100%;
  border-collapse: collapse;
  table-layout: fixed;
}
th {
  height: 25px;
  padding: 0 0 0 7px;
  border: 1px solid #f6f6f6;
  text-align: left;
  color: #979797;
}
th:first-child {
  padding-left: 6px;
  border-left: 0;
}
.sorted {
  display: flex;
  align-items: center;
  justify-content: space-between;
  padding-right: 8px;
}
.col-size {
  width: 42px;
}
.col-type {
  width: 47px;
}
.col-modified {
  width: 76px;
}
.dialog-foot {
  display: flex;
  align-items: flex-start;
  justify-content: space-between;
  height: 57px;
  padding: 6px 6px 0 10px;
  border-top: 1px solid #c4c4c4;
}
.options {
  display: flex;
  flex-direction: column;
  gap: 2px;
  padding-top: 1px;
}
.light {
  width: 315px;
}
.light select {
  border-color: #cdcdcd;
  background: #fff;
}
```
